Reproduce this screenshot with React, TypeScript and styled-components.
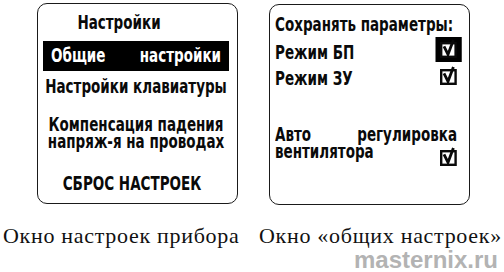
import React from 'react';
import styled, { createGlobalStyle } from 'styled-components';

// the display font is a narrow one, squeeze the screen contents horizontally
const S = 0.75;
const sx = (n: number) => `${(n / S).toFixed(2)}px`;

const GlobalStyle = createGlobalStyle`
  html, body {
    margin: 0;
    padding: 0;
    background: #fff;
  }
  body {
    width: 504px;
    height: 272px;
    overflow: hidden;
  }
`;

function Check() {
  return (
    <svg width={sx(17)} height="19" viewBox="0 0 17 19" preserveAspectRatio="none">
      <rect x="1.2" y="4.2" width="14.4" height="13.6" fill="#fff" stroke="#0a0a0a" strokeWidth="2.4" />
      <path d="M4 7.4 L8 15.4 L13.4 1" fill="none" stroke="#0a0a0a" strokeWidth="2.8" />
    </svg>
  );
}

function App() {
  return (
    <Page>
      <GlobalStyle />
      <Screens>
        <Screen $pad="9.5px 0 0 4.5px">
          <Squeeze $width={186} $center>
            <Line $shift={-17}>Настройки</Line>
            <Selected>
              <span>Общие</span>
              <span>настройки</span>
            </Selected>
            <MenuItem $top={7}>Настройки клавиатуры</MenuItem>
            <MenuItem $top={21}>
              Компенсация падения
              <br />
              напряж-я на проводах
            </MenuItem>
            <MenuItem $top={25} $shift={-4}>
              СБРОС НАСТРОЕК
            </MenuItem>
          </Squeeze>
        </Screen>

        <Screen $pad="10.5px 0 0 4.5px" $offset={1}>
          <Squeeze $width={182}>
            <Line>Сохранять параметры:</Line>
            <OptionRow $top={4}>
              <Line>Режим БП</Line>
              <Cursor>
                <Check />
              </Cursor>
            </OptionRow>
            <OptionRow $top={5}>
              <Line>Режим ЗУ</Line>
              <Box $drop={-2}>
                <Check />
              </Box>
            </OptionRow>
            <Spread $top={39}>
              <span>Авто</span>
              <span>регулировка</span>
            </Spread>
            <OptionRow>
              <Line>вентилятора</Line>
              <Box $drop={6}>
                <Check />
              </Box>
            </OptionRow>
          </Squeeze>
        </Screen>
      </Screens>

      <Captions>
        <Caption>Окно настроек прибора</Caption>
        <Caption>Окно «общих настроек»</Caption>
      </Captions>
      <Watermark>masternix.ru</Watermark>
    </Page>
  );
}

export default App;

const Page = styled.main`
  display: flex;
  flex-direction: column;
  width: 504px;
  height: 272px;
  padding-top: 3px;
  box-sizing: border-box;
`;

const Screens = styled.div`
  display: flex;
  gap: 31px;
  padding-left: 37px;
`;

const Screen = styled.section<{ $pad: string; $offset?: number }>`
  width: 201px;
  height: 201px;
  flex: none;
  box-sizing: border-box;
  border: 1.5px solid #1a1a1a;
  border-radius: 10px;
  padding: ${(p) => p.$pad};
  margin-top: ${(p) => p.$offset || 0}px;
  overflow: hidden;
  font-family: 'DejaVu Sans', sans-serif;
  font-stretch: condensed;
  font-weight: bold;
  font-size: 20px;
  color: #0a0a0a;
  white-space: nowrap;
`;

const Squeeze = styled.div<{ $width: number; $center?: boolean }>`
  width: ${(p) => sx(p.$width)};
  display: flex;
  flex-direction: column;
  align-items: ${(p) => (p.$center ? 'center' : 'stretch')};
  transform: scaleX(${S});
  transform-origin: left top;
`;

const Line = styled.div<{ $shift?: number }>`
  line-height: 17px;
  margin-left: ${(p) => ((p.$shift || 0) < 0 ? '0' : sx(2 * (p.$shift || 0)))};
  margin-right: ${(p) => ((p.$shift || 0) < 0 ? sx(-2 * (p.$shift || 0)) : '0')};
`;

const Selected = styled.div`
  align-self: stretch;
  margin-top: 10px;
  height: 30px;
  background: #000;
  color: #fff;
  display: flex;
  justify-content: space-between;
  align-items: center;
  line-height: 17px;
  padding: 0 ${sx(8)} 0 ${sx(8)};
`;

const MenuItem = styled(Line)<{ $top: number }>`
  margin-top: ${(p) => p.$top}px;
  text-align: center;
`;

const OptionRow = styled.div<{ $top?: number }>`
  display: flex;
  justify-content: space-between;
  align-items: flex-end;
  margin-top: ${(p) => p.$top || 0}px;
`;

const Box = styled.div<{ $drop: number }>`
  display: flex;
  margin-bottom: ${(p) => -p.$drop}px;
`;

const Cursor = styled.div`
  display: flex;
  align-items: flex-end;
  justify-content: center;
  width: ${sx(26)};
  height: 25px;
  box-sizing: border-box;
  padding-bottom: 4px;
  margin-right: ${sx(-4.5)};
  margin-bottom: -1px;
  background: #000;
`;

const Spread = styled.div<{ $top: number }>`
  display: flex;
  justify-content: space-between;
  line-height: 17px;
  margin-top: ${(p) => p.$top}px;
`;

const Captions = styled.div`
  display: grid;
  grid-template-columns: 256px 248px;
  margin-top: 21px;
  font-family: 'Liberation Serif', 'Times New Roman', serif;
  font-size: 22px;
  letter-spacing: 0.7px;
  color: #111;
`;

const Caption = styled.div`
  padding-left: 3px;
  line-height: 20px;
  white-space: nowrap;
`;

const Watermark = styled.div`
  align-self: flex-end;
  margin-right: 6px;
  margin-top: 5px;
  font-family: 'Liberation Sans', Arial, sans-serif;
  font-weight: bold;
  font-size: 24px;
  line-height: 18px;
  color: #b3b3b3;
`;
